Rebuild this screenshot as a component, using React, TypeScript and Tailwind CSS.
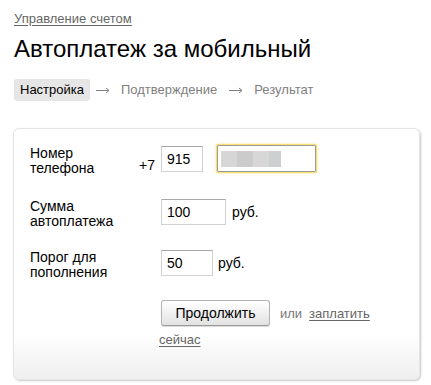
import React from "react";

const inputCls =
  "h-[26px] border border-[#d0d0d0] border-t-[#a8a8a8] bg-white px-[5px] text-[14px] leading-[24px] text-black outline-none";

function Arrow() {
  return (
    <svg width="14" height="8" viewBox="0 0 14 8" className="ml-[6px] mr-[5px] shrink-0 text-[#808080]">
      <path d="M0 4.5h13M10 2l3 2.5-3 2.5" stroke="currentColor" strokeWidth="1" fill="none" />
    </svg>
  );
}

function Row({
  label,
  prefix,
  children,
  className = "",
}: {
  label: React.ReactNode;
  prefix?: string;
  children: React.ReactNode;
  className?: string;
}) {
  return (
    <div className={`flex items-start ${className}`}>
      <div className="flex w-[131px] shrink-0 items-start">
        <div className="w-[108px] text-[14px] leading-[15px] text-black">{label}</div>
        {prefix && <div className="mt-[12px] w-[17px] text-right text-[14px] leading-[16px] text-black">{prefix}</div>}
      </div>
      <div className="flex items-center">{children}</div>
    </div>
  );
}

export default function App() {
  const steps = ["Настройка", "Подтверждение", "Результат"];

  return (
    <div className="min-h-[385px] bg-white px-[13px] pt-[11px] font-['Liberation_Sans',Arial,sans-serif]">
      <a href="#" className="ml-px block w-fit text-[13px] leading-[16px] text-[#666] underline underline-offset-2">
        Управление счетом
      </a>

      <h1 className="ml-px mt-[8px] text-[24px] font-normal leading-[28px] text-black">Автоплатеж за мобильный</h1>

      <div className="ml-px mt-[16px] flex items-center text-[13px] leading-[22px]">
        {steps.map((s, i) => (
          <React.Fragment key={s}>
            {i > 0 && <Arrow />}
            <span
              className={`rounded-[3px] px-[6px] ${i === 0 ? "bg-[#e6e6e6] text-black" : "text-[#808080]"}`}
            >
              {s}
            </span>
          </React.Fragment>
        ))}
      </div>

      <div className="mt-[27px] h-[252px] w-[407px] rounded-[6px] border border-[#e4e4e4] bg-gradient-to-b from-white from-[82%] to-[#efefef] pl-[16px] pr-[16px] pt-[16px] shadow-[1px_1px_2px_rgba(0,0,0,0.22)]">
        <Row
          prefix="+7"
          label={
            <div className="pt-px">
              Номер
              <br />
              телефона
            </div>
          }
        >
          <input className={`${inputCls} w-[42px]`} defaultValue="915" />
          <div className="ml-[14px] flex h-[27px] w-[99px] items-center rounded-[1px] border border-[#9c9c9c] pl-[3px] shadow-[0_0_0_1px_#f7dd72,0_0_3px_1px_rgba(247,210,80,0.6)]">
            <div className="flex h-[16px]">
              <div className="w-[16px] bg-[#d6d6d6]" />
              <div className="w-[16px] bg-[#cbcbcb]" />
              <div className="w-[16px] bg-[#d7d7d7]" />
              <div className="w-[12px] bg-[#ccd0d0]" />
            </div>
          </div>
        </Row>

        <Row
          className="mt-[23px]"
          label={
            <>
              Сумма
              <br />
              автоплатежа
            </>
          }
        >
          <input className={`${inputCls} w-[65px]`} defaultValue="100" />
          <span className="ml-[6px] text-[14px] text-black">руб.</span>
        </Row>

        <Row
          className="mt-[21px]"
          label={
            <>
              Порог для
              <br />
              пополнения
            </>
          }
        >
          <input className={`${inputCls} w-[52px]`} defaultValue="50" />
          <span className="ml-[5px] text-[14px] text-black">руб.</span>
        </Row>

        <div className="ml-[129px] mt-[20px] text-[13px] leading-[26px]">
          <button className="ml-[2px] mr-[10px] inline-block h-[26px] w-[109px] rounded-[3px] border border-[#b4b4b4] border-b-[#999] bg-gradient-to-b from-white to-[#e2e2e2] align-baseline text-[14px] leading-[24px] text-black shadow-[0_1px_1px_rgba(0,0,0,0.15)]">
            Продолжить
          </button>
          <span className="text-[#777]">или</span>
          <a href="#" className="ml-[7px] text-[#666] underline underline-offset-2">
            заплатить
          </a>{" "}
          <a href="#" className="text-[#666] underline underline-offset-2">
            сейчас
          </a>
        </div>
      </div>
    </div>
  );
}
